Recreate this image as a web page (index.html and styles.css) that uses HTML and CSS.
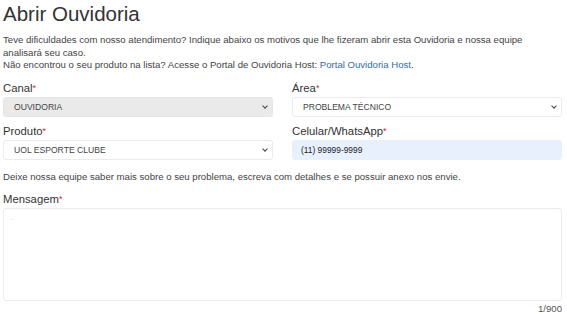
FILE: index.html
```html
<!DOCTYPE html>
<html>
<head>
    <meta charset="utf-8">
    <title>Abrir Ouvidoria</title>
    <link rel="stylesheet" href="styles.css">
</head>
<body>
<div class="container">
    <h1>Abrir Ouvidoria</h1>

    <div class="explain">
        <p>Teve dificuldades com nosso atendimento? Indique abaixo os motivos que lhe fizeram abrir esta Ouvidoria e nossa equipe analisará seu caso.</p>
        <p>Não encontrou o seu produto na lista? Acesse o Portal de Ouvidoria Host: <a href="#">Portal Ouvidoria Host</a>.</p>
    </div>

    <div class="row">
        <div class="field">
            <label>Canal<span class="req">*</span></label>
            <div class="select disabled">OUVIDORIA<span class="caret"></span></div>
        </div>
        <div class="field">
            <label>Área<span class="req">*</span></label>
            <div class="select">PROBLEMA TÉCNICO<span class="caret"></span></div>
        </div>
    </div>

    <div class="row">
        <div class="field">
            <label>Produto<span class="req">*</span></label>
            <div class="select">UOL ESPORTE CLUBE<span class="caret"></span></div>
        </div>
        <div class="field">
            <label>Celular/WhatsApp<span class="req">*</span></label>
            <div class="input autofill">(11) 99999-9999</div>
        </div>
    </div>

    <div class="hint">Deixe nossa equipe saber mais sobre o seu problema, escreva com detalhes e se possuir anexo nos envie.</div>

    <div class="field">
        <label>Mensagem<span class="req">*</span></label>
        <div class="textarea"><span class="dot">.</span></div>
        <div class="counter">1/900</div>
    </div>
</div>
</body>
</html>
```

FILE: styles.css
```css
body {
    font: 9.6px "Liberation Sans", Arial, sans-serif;
    color: #444;
    background: #fff;
    margin: 0;
    padding: 0;
}

.container {
    padding: 3px 5px 0 3px;
}

h1 {
    font-weight: normal;
    font-size: 20.5px;
    color: #333;
    margin: 0 0 9px 0;
    line-height: 22px;
}

.explain p {
    margin: 0;
    line-height: 12.5px;
}

.explain {
    margin-bottom: 10px;
}

a {
    text-decoration: none;
    color: #2a6fb0;
}

.row {
    display: grid;
    grid-template-columns: 270px 270px;
    column-gap: 19px;
    margin-bottom: 8px;
}

label {
    display: block;
    font-size: 11.3px;
    color: #333;
    line-height: 13px;
    margin-bottom: 2px;
}

.req {
    color: #e02020;
    font-size: 9px;
    vertical-align: top;
}

.select,
.input {
    position: relative;
    height: 20px;
    line-height: 19px;
    box-sizing: border-box;
    border: 1px solid #ebebeb;
    border-radius: 3px;
    padding: 0 10px;
    font-size: 8.6px;
    color: #444;
    background: #fff;
}

.select.disabled {
    background: #eaeaea;
    border-color: #e6e6e6;
}

.input {
    padding-left: 8px;
    font-size: 8.4px;
    color: #222;
}

.input.autofill {
    background: #e8f0fe;
    border-color: #e8f0fe;
}

.caret {
    position: absolute;
    right: 5px;
    top: 6px;
    width: 3px;
    height: 3px;
    border-right: 1.5px solid #444;
    border-bottom: 1.5px solid #444;
    transform: rotate(45deg);
}

.hint {
    margin: 10px 0 10px 0;
    line-height: 13px;
}

.textarea {
    height: 93px;
    box-sizing: border-box;
    border: 1px solid #ebebeb;
    border-radius: 3px;
    padding: 2px 7px;
    width: 559px;
}

.dot {
    color: #bbb;
    font-size: 8px;
}

.counter {
    text-align: right;
    width: 559px;
    color: #555;
    line-height: 13px;
    margin-top: 1px;
}
```
